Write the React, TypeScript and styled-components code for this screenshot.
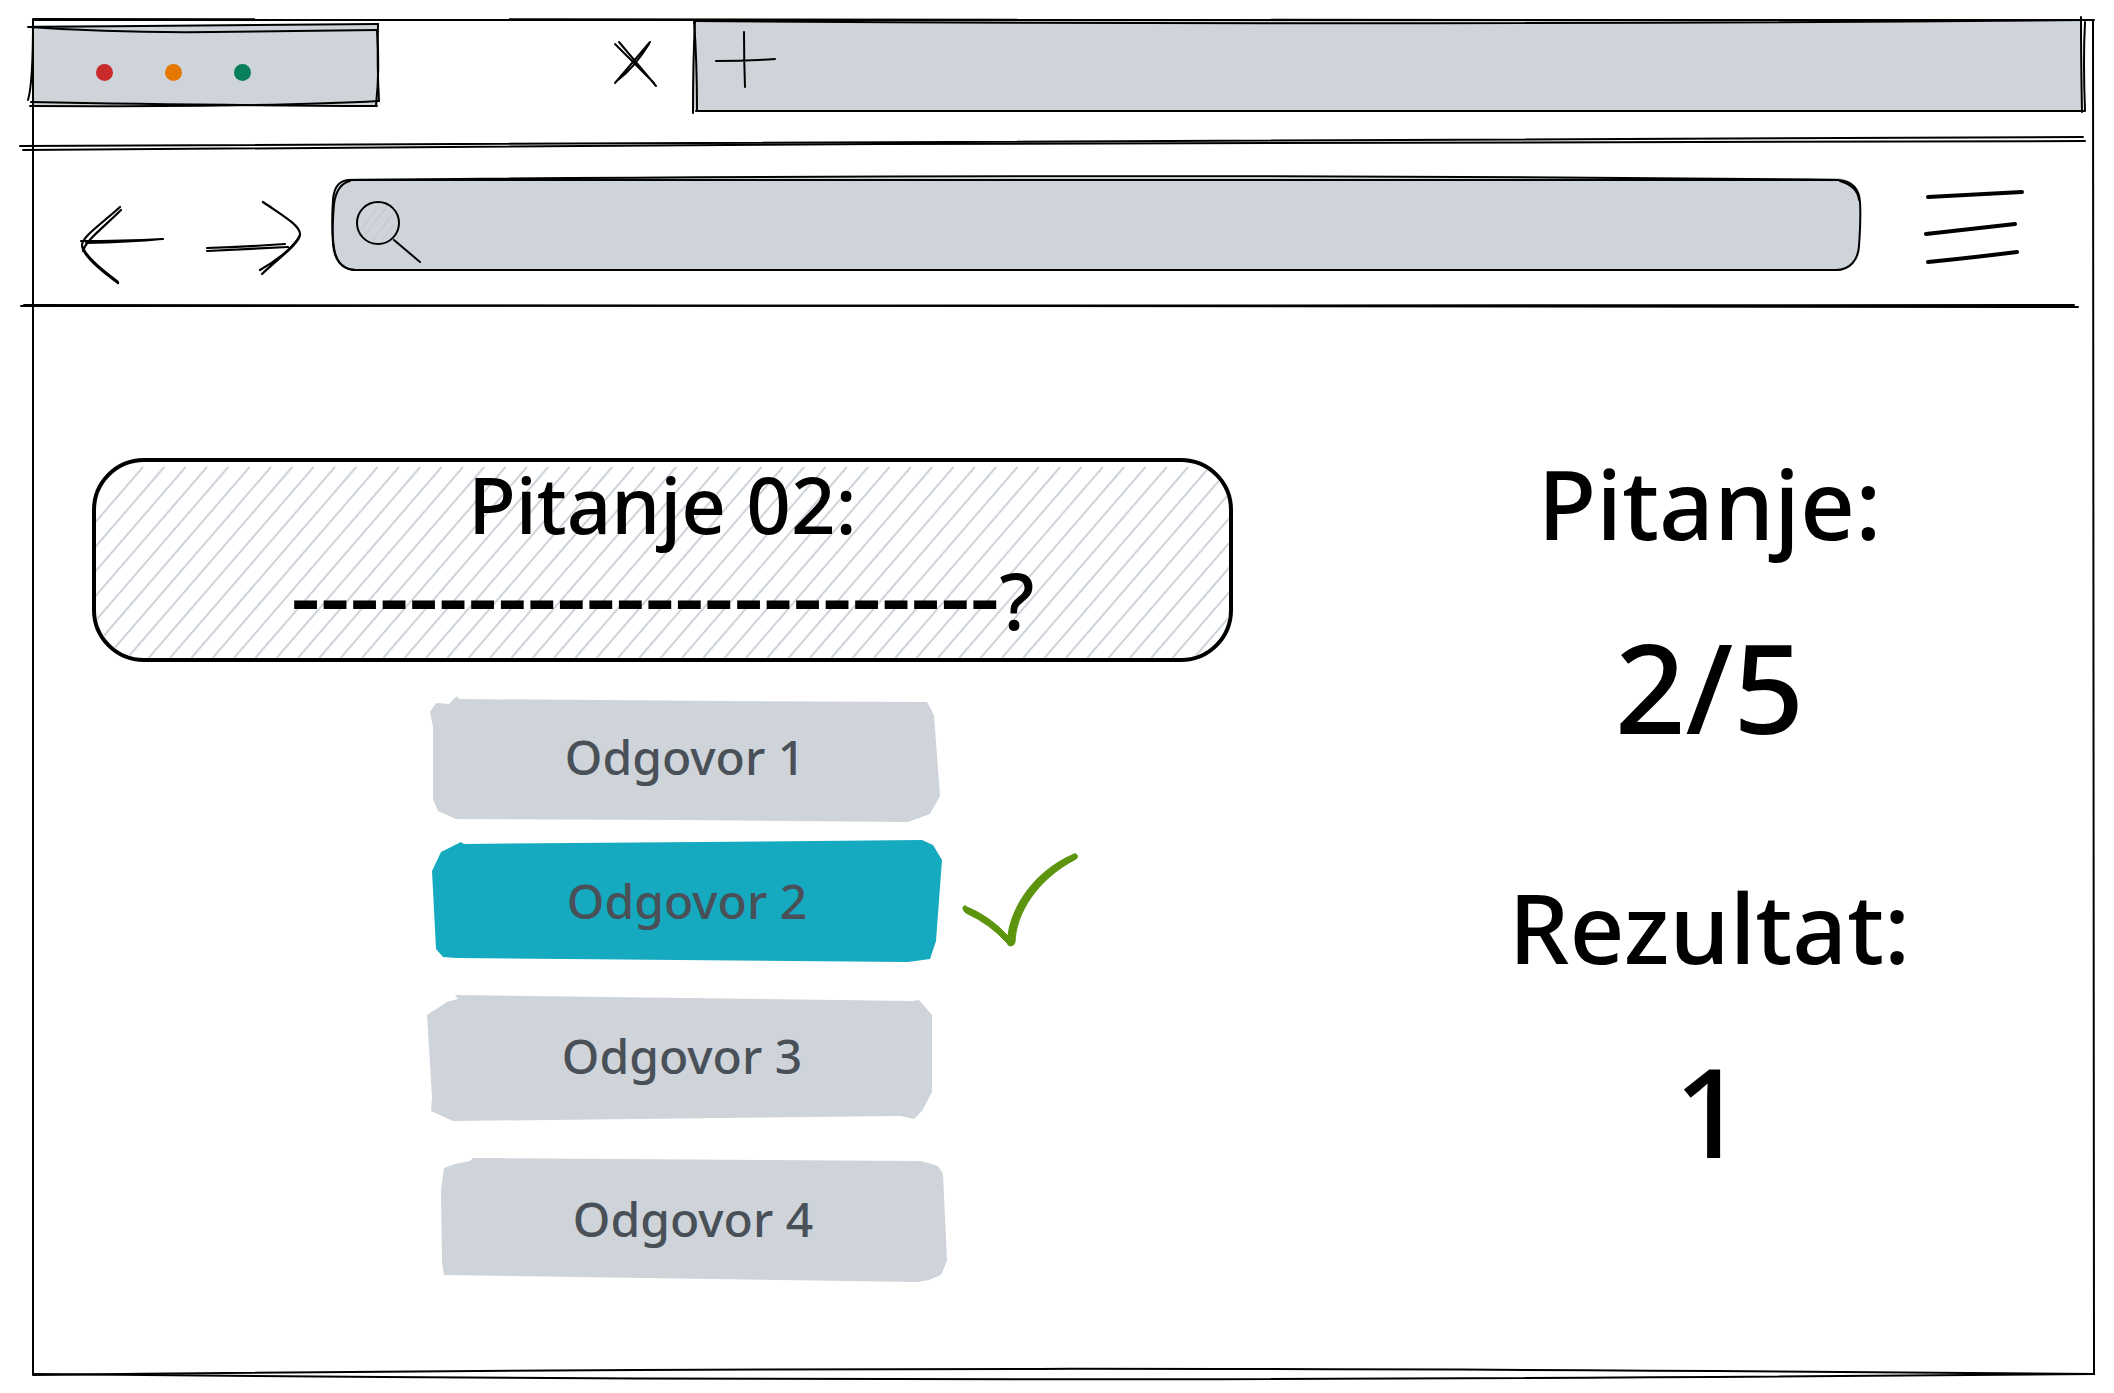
import React, { useState } from "react";
import styled, { createGlobalStyle } from "styled-components";

const ink = "#000000";
const grey = "#ced4da";
const slate = "#495057";
const teal = "#15aabf";
const green = "#5c940d";

const GlobalStyle = createGlobalStyle`
  *, *::before, *::after { box-sizing: border-box; }
  body {
    margin: 0;
    background: #ffffff;
    color: ${ink};
    font-family: "Noto Sans", "Open Sans", sans-serif;
    overflow-x: hidden;
  }
  h1, h2, p { margin: 0; font-weight: 500; }
  button { font: inherit; color: inherit; border: 0; padding: 0; background: none; cursor: pointer; }
`;

/* Pen strokes laid over a box; they stretch along with it. */
const Strokes = styled.svg`
  position: absolute;
  inset: 0;
  width: 100%;
  height: 100%;
  overflow: visible;
  pointer-events: none;
  fill: none;
  stroke: ${ink};
  stroke-linecap: round;

  path { vector-effect: non-scaling-stroke; }
`;

const Glyph = styled.svg`
  display: block;
  overflow: visible;
  fill: none;
  stroke: ${ink};
  stroke-linecap: round;
  stroke-linejoin: round;
`;

function Outline({ w, h, pen = 2, paths }: { w: number; h: number; pen?: number; paths: string[] }) {
  return (
    <Strokes viewBox={`0 0 ${w} ${h}`} preserveAspectRatio="none" strokeWidth={pen} aria-hidden="true">
      {paths.map((d) => (
        <path key={d} d={d} />
      ))}
    </Strokes>
  );
}

const Browser = styled.div`
  position: relative;
  display: flex;
  flex-direction: column;
  min-height: calc(100vh - 38px);
  margin: 20px 20px 18px 33px;
`;

const TabStrip = styled.header`
  display: flex;
  align-items: flex-start;
  height: 125px;
  padding-right: 12px;
`;

const WindowControls = styled.div`
  position: relative;
  display: flex;
  align-items: center;
  width: 345px;
  height: 80px;
  margin-top: 5px;
  padding: 0 64px 0 63px;
  background: ${grey};
`;

const Dots = styled.div`
  display: flex;
  gap: 52px;
  padding-top: 14px;
`;

const Dot = styled.button<{ $color: string }>`
  width: 17px;
  height: 17px;
  border-radius: 50%;
  background: ${(p) => p.$color};
`;

const Tab = styled.div`
  display: flex;
  justify-content: flex-end;
  width: 316px;
  padding: 22px 38px 0 0;
`;

const TabFiller = styled.div`
  position: relative;
  flex: 1;
  height: 91px;
  padding: 12px 22px;
  background: ${grey};
`;

const Rule = styled.div`
  position: relative;
  height: 2px;
`;

const Toolbar = styled.nav`
  display: flex;
  align-items: flex-start;
  height: 158px;
  padding: 31px 68px 0 47px;
`;

const BackButton = styled.button`
  margin-right: 38px;
`;

const ForwardButton = styled.button`
  margin-right: 28px;
`;

const SearchBar = styled.label`
  position: relative;
  display: flex;
  flex: 1;
  gap: 20px;
  height: 92px;
  padding: 0 24px;
  margin-right: 64px;
  border-radius: 22px;
  background: ${grey};
`;

const SearchInput = styled.input`
  flex: 1;
  border: 0;
  outline: 0;
  background: transparent;
  font: inherit;
  font-size: 48px;
`;

const Page = styled.main`
  display: grid;
  grid-template-columns: 1141fr 769fr;
  column-gap: 92px;
  align-items: start;
  padding: 151px 0 0 59px;
`;

const QuestionCard = styled.section`
  position: relative;
  height: 204px;
  border: 4px solid ${ink};
  border-radius: 52px;
  text-align: center;
`;

const Hatching = styled.svg`
  position: absolute;
  inset: 0;
  width: 100%;
  height: 100%;
  border-radius: 48px;
  overflow: hidden;
  stroke: ${grey};
  stroke-width: 2;
`;

const QuestionTitle = styled.h1`
  position: relative;
  font-size: 78px;
  line-height: 84px;
`;

const QuestionText = styled.p`
  position: relative;
  display: flex;
  justify-content: center;
  align-items: baseline;
  font-size: 78px;
  line-height: 98px;
  white-space: nowrap;
`;

const Blank = styled.span`
  font-size: 92px;
`;

const Answers = styled.ul`
  list-style: none;
  margin: 0;
  padding: 34px 0 0 335px;
`;

const AnswerRow = styled.li<{ $gap: number; $indent: number }>`
  display: flex;
  align-items: center;
  gap: 20px;
  padding-left: ${(p) => p.$indent}px;
  margin-top: ${(p) => p.$gap}px;
`;

const AnswerButton = styled.button<{ $shape: string; $picked: boolean }>`
  width: 510px;
  height: 126px;
  padding-bottom: 4px;
  clip-path: polygon(${(p) => p.$shape});
  background: ${(p) => (p.$picked ? teal : grey)};
  color: ${slate};
  font-size: 48px;
  font-weight: 500;
  line-height: 60px;
`;

const Stats = styled.aside`
  display: flex;
  flex-direction: column;
  gap: 136px;
  text-align: center;
`;

const Stat = styled.section`
  display: flex;
  flex-direction: column;
  gap: 78px;
`;

const StatLabel = styled.h2`
  font-size: 96px;
  line-height: 90px;
`;

const StatValue = styled.p`
  font-size: 124px;
  line-height: 120px;
`;

/* Cut-paper corners: each pair is an x/y point inside the 510 by 126 button. */
const cut = (points: number[][]) => points.map(([x, y]) => `${x}px ${y}px`).join(", ");

const answers = [
  {
    label: "Odgovor 1",
    gap: 0,
    indent: 3,
    shape: cut([[0, 16], [6, 7], [19, 8], [27, 0], [29, 3], [292, 5], [497, 6], [504, 19], [510, 100], [500, 118], [478, 126], [248, 124], [26, 123], [8, 115], [3, 103], [3, 31]]),
  },
  {
    label: "Odgovor 2",
    gap: 18,
    indent: 5,
    shape: cut([[0, 31], [9, 12], [29, 2], [32, 4], [490, 0], [501, 5], [510, 20], [504, 101], [498, 119], [476, 122], [24, 118], [11, 117], [4, 109]]),
  },
  {
    label: "Odgovor 3",
    gap: 29,
    indent: 0,
    shape: cut([[0, 20], [20, 7], [31, 4], [28, 0], [485, 6], [492, 5], [505, 20], [505, 97], [495, 116], [487, 124], [474, 121], [26, 126], [4, 116], [5, 102]]),
  },
  {
    label: "Odgovor 4",
    gap: 37,
    indent: 11,
    shape: cut([[6, 10], [17, 6], [32, 3], [35, 0], [483, 3], [500, 8], [505, 16], [509, 103], [503, 117], [491, 122], [479, 124], [6, 117], [4, 105], [3, 32]]),
  },
];

const hatchLines = Array.from({ length: 64 }, (_, i) => -118 + i * 21.33);

export default function App() {
  const [picked, setPicked] = useState(1);

  return (
    <>
      <GlobalStyle />
      <Browser>
        <TabStrip>
          <WindowControls>
            <Outline
              w={345}
              h={80}
              paths={[
                "M-5 2 Q170 1 345 -1",
                "M-4 2 Q80 8 180 7 T344 5",
                "M0 -4 C0 30 -1 62 -5 75",
                "M0 55 L0 80",
                "M345 -1 Q344 40 346 76",
                "M344 6 Q347 44 343 80",
                "M-3 81 Q240 82 346 76",
                "M-2 77 Q150 80 344 81",
              ]}
            />
            <Dots>
              <Dot $color="#c92a2a" aria-label="Close window" />
              <Dot $color="#e67700" aria-label="Minimise window" />
              <Dot $color="#087f5b" aria-label="Maximise window" />
            </Dots>
          </WindowControls>
          <Tab>
            <button type="button" aria-label="Close tab">
              <Glyph width="42" height="46" viewBox="0 0 42 46" strokeWidth="2">
                <path d="M1 2 L40 41 M5 0 L42 44 M36 0 L1 41 M35 2 Q20 26 4 38" />
              </Glyph>
            </button>
          </Tab>
          <TabFiller>
            <Outline
              w={1388}
              h={91}
              paths={[
                "M0 1 Q720 6 1389 0",
                "M1 1 Q-1 40 -1 93",
                "M0 1 Q3 40 3 91",
                "M2 91 L1390 91",
                "M1387 -3 Q1387 40 1388 92",
                "M1391 2 Q1389 40 1391 91",
              ]}
            />
            <button type="button" aria-label="New tab">
              <Glyph width="59" height="56" viewBox="0 0 59 56" strokeWidth="2">
                <path d="M0 29 Q28 29 59 27 M28 0 Q28 28 29 55" />
              </Glyph>
            </button>
          </TabFiller>
        </TabStrip>
        <Rule>
          <Outline w={2061} h={2} paths={["M-13 1 C600 1 1300 -7 2050 -8", "M-10 5 C700 -1 1300 -4 2052 -4"]} />
        </Rule>
        <Toolbar>
          <BackButton type="button" aria-label="Back">
            <Glyph width="86" height="106" viewBox="0 0 86 106" strokeWidth="2.2">
              <path d="M40 29 C20 47 2 59 2 67 C2 76 20 92 38 105 M41 32 C24 49 6 62 3 73 M3 70 C8 81 24 93 38 104 M1 63 Q40 63 83 61 M6 65 Q50 64 82 61" />
            </Glyph>
          </BackButton>
          <ForwardButton type="button" aria-label="Forward">
            <Glyph width="100" height="106" viewBox="0 0 100 106" strokeWidth="2.2">
              <path d="M59 24 C76 36 96 47 96 56 C96 65 76 79 58 96 M96 57 C92 67 74 82 56 92 M3 70 Q40 69 81 66 M3 73 Q40 71 84 69" />
            </Glyph>
          </ForwardButton>
          <SearchBar>
            <Outline
              w={1528}
              h={92}
              paths={[
                "M20 2 C400 -2 1000 -4 1506 2",
                "M18 2 C500 6 1000 6 1506 2",
                "M20 2 C8 1 2 8 1 22 Q-1 50 2 70 C4 84 10 92 24 92",
                "M18 3 C9 5 4 12 2 26 Q0 50 1 66 C3 82 9 90 22 92",
                "M22 92 L1506 92",
                "M1506 2 C1518 3 1527 8 1528 24 Q1529 40 1527 68 C1526 82 1518 92 1504 92",
                "M1508 3 C1518 6 1526 12 1527 22",
              ]}
            />
            <Glyph width="66" height="92" viewBox="0 0 66 92" strokeWidth="2">
              <circle cx="22" cy="45" r="21" />
              <path d="M38 62 L64 84" />
              <path d="M6 50 L20 32 M9 57 L31 29 M17 62 L37 36 M27 61 L38 47" stroke="#bfc6c6" strokeWidth="1" />
            </Glyph>
            <SearchInput type="text" aria-label="Search" />
          </SearchBar>
          <button type="button" aria-label="Menu">
            <Glyph width="102" height="88" viewBox="0 0 102 88" strokeWidth="4">
              <path d="M4 19 L98 14 M2 56 Q45 51 91 46 M4 84 Q45 80 93 74" />
            </Glyph>
          </button>
        </Toolbar>
        <Rule>
          <Outline w={2061} h={2} paths={["M-12 1 L2041 0", "M-9 0 C700 0 1400 0 2045 2"]} />
        </Rule>
        <Page>
          <div>
            <QuestionCard>
              <Hatching aria-hidden="true">
                {hatchLines.map((x) => (
                  <line key={x} x1={x} y1="196" x2={x + 165} y2="5" />
                ))}
              </Hatching>
              <QuestionTitle>Pitanje 02:</QuestionTitle>
              <QuestionText>
                <Blank>------------------------</Blank>?
              </QuestionText>
            </QuestionCard>
            <Answers>
              {answers.map((a, i) => (
                <AnswerRow key={a.label} $gap={a.gap} $indent={a.indent}>
                  <AnswerButton
                    type="button"
                    $shape={a.shape}
                    $picked={picked === i}
                    aria-pressed={picked === i}
                    onClick={() => setPicked(i)}
                  >
                    {a.label}
                  </AnswerButton>
                  {picked === i && (
                    <Glyph width="116" height="102" viewBox="0 0 116 102" fillRule="nonzero" aria-hidden="true">
                      <path
                        d="M3 54 Q28 64 46 84 C48 62 66 22 112 2 C115 1 117 5 114 7 C74 28 54 62 53 90 C52 95 46 95 45 91 Q28 72 4 61 C0 58 0 54 3 54 Z"
                        fill={green}
                        stroke={green}
                        strokeWidth="1"
                      />
                    </Glyph>
                  )}
                </AnswerRow>
              ))}
            </Answers>
          </div>
          <Stats>
            <Stat>
              <StatLabel>Pitanje:</StatLabel>
              <StatValue>2/5</StatValue>
            </Stat>
            <Stat>
              <StatLabel>Rezultat:</StatLabel>
              <StatValue>1</StatValue>
            </Stat>
          </Stats>
        </Page>
        <Outline
          w={2061}
          h={1355}
          paths={[
            "M0 0 L2061 0",
            "M0 -1 L1500 0",
            "M0 0 L0 1354",
            "M2060 0 L2061 1354",
            "M0 1355 C700 1347 1300 1347 2061 1354",
            "M0 1354 C700 1361 1300 1361 2061 1354",
          ]}
        />
      </Browser>
    </>
  );
}
